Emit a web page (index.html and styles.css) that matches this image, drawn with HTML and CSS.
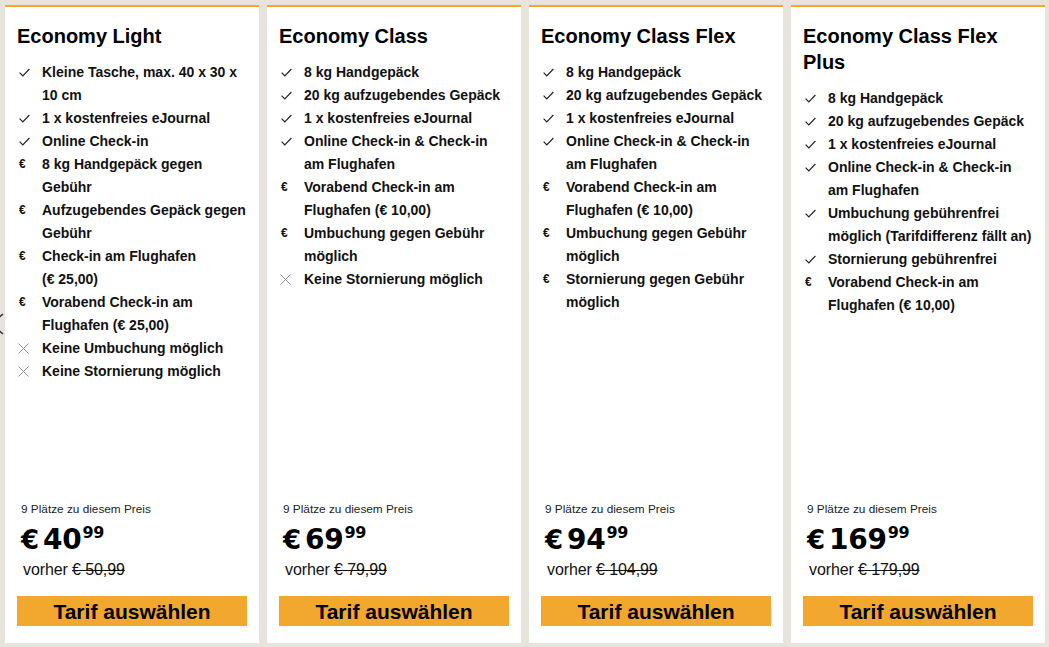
FILE: index.html
```html
<!DOCTYPE html>
<html lang="de">
<head>
<meta charset="utf-8">
<title>Tarife</title>
<link rel="stylesheet" href="styles.css">
</head>
<body>
<svg class="carousel-prev" width="14" height="28" viewBox="0 0 14 28"><polyline points="12,4 0,14 12,24" fill="none" stroke="#333" stroke-width="1.5"/></svg>
<main class="fares">
  <section class="card">
    <h2 class="title">Economy Light</h2>
    <ul class="features">
      <li class="ok">Kleine Tasche, max. 40 x 30 x 10 cm</li>
      <li class="ok">1 x kostenfreies eJournal</li>
      <li class="ok">Online Check-in</li>
      <li class="fee">8 kg Handgepäck gegen Gebühr</li>
      <li class="fee">Aufzugebendes Gepäck gegen Gebühr</li>
      <li class="fee">Check-in am Flughafen (€&nbsp;25,00)</li>
      <li class="fee">Vorabend Check-in am Flughafen (€&nbsp;25,00)</li>
      <li class="no">Keine Umbuchung möglich</li>
      <li class="no">Keine Stornierung möglich</li>
    </ul>
    <div class="bottom">
      <div class="seats">9 Plätze zu diesem Preis</div>
      <div class="price"><span class="cur">€</span><span class="int">40</span><span class="cents">99</span></div>
      <div class="before">vorher <s>€&nbsp;50,99</s></div>
      <button class="select">Tarif auswählen</button>
    </div>
  </section>
  <section class="card">
    <h2 class="title">Economy Class</h2>
    <ul class="features">
      <li class="ok">8 kg Handgepäck</li>
      <li class="ok">20 kg aufzugebendes Gepäck</li>
      <li class="ok">1 x kostenfreies eJournal</li>
      <li class="ok">Online Check-in &amp; Check-in am Flughafen</li>
      <li class="fee">Vorabend Check-in am Flughafen (€&nbsp;10,00)</li>
      <li class="fee">Umbuchung gegen Gebühr möglich</li>
      <li class="no">Keine Stornierung möglich</li>
    </ul>
    <div class="bottom">
      <div class="seats">9 Plätze zu diesem Preis</div>
      <div class="price"><span class="cur">€</span><span class="int">69</span><span class="cents">99</span></div>
      <div class="before">vorher <s>€&nbsp;79,99</s></div>
      <button class="select">Tarif auswählen</button>
    </div>
  </section>
  <section class="card">
    <h2 class="title">Economy Class Flex</h2>
    <ul class="features">
      <li class="ok">8 kg Handgepäck</li>
      <li class="ok">20 kg aufzugebendes Gepäck</li>
      <li class="ok">1 x kostenfreies eJournal</li>
      <li class="ok">Online Check-in &amp; Check-in am Flughafen</li>
      <li class="fee">Vorabend Check-in am Flughafen (€&nbsp;10,00)</li>
      <li class="fee">Umbuchung gegen Gebühr möglich</li>
      <li class="fee">Stornierung gegen Gebühr möglich</li>
    </ul>
    <div class="bottom">
      <div class="seats">9 Plätze zu diesem Preis</div>
      <div class="price"><span class="cur">€</span><span class="int">94</span><span class="cents">99</span></div>
      <div class="before">vorher <s>€&nbsp;104,99</s></div>
      <button class="select">Tarif auswählen</button>
    </div>
  </section>
  <section class="card">
    <h2 class="title">Economy Class Flex Plus</h2>
    <ul class="features">
      <li class="ok">8 kg Handgepäck</li>
      <li class="ok">20 kg aufzugebendes Gepäck</li>
      <li class="ok">1 x kostenfreies eJournal</li>
      <li class="ok">Online Check-in &amp; Check-in am Flughafen</li>
      <li class="ok">Umbuchung gebührenfrei möglich (Tarifdifferenz fällt an)</li>
      <li class="ok">Stornierung gebührenfrei</li>
      <li class="fee">Vorabend Check-in am Flughafen (€&nbsp;10,00)</li>
    </ul>
    <div class="bottom">
      <div class="seats">9 Plätze zu diesem Preis</div>
      <div class="price"><span class="cur">€</span><span class="int">169</span><span class="cents">99</span></div>
      <div class="before">vorher <s>€&nbsp;179,99</s></div>
      <button class="select">Tarif auswählen</button>
    </div>
  </section>
</main>
</body>
</html>
```

FILE: styles.css
```css
* { box-sizing: border-box; }
html, body { margin: 0; padding: 0; }
body {
  background: #e7e4de;
  font-family: "Liberation Sans", Arial, sans-serif;
  color: #111;
  width: 1049px;
  height: 647px;
  overflow: hidden;
  position: relative;
}
.carousel-prev {
  position: absolute;
  left: -9px;
  top: 310px;
}
.fares {
  display: grid;
  grid-template-columns: repeat(4, 254px);
  column-gap: 8px;
  padding: 5px 4px 4px 5px;
  height: 647px;
}
.card {
  background: #fff;
  border-top: 2px solid #f2a72f;
  padding: 16px 12px 17px;
  display: flex;
  flex-direction: column;
}
.title {
  margin: 0;
  font-size: 20px;
  line-height: 26px;
  font-weight: 700;
  color: #000;
}
.features {
  list-style: none;
  margin: 12px -1px 0 0;
  padding: 0;
}
.features li {
  position: relative;
  padding-left: 25px;
  font-size: 14px;
  font-weight: 700;
  line-height: 23px;
  color: #111;
}
.features li::before {
  content: "";
  position: absolute;
  left: 2px;
  top: 7px;
  width: 11px;
  height: 9px;
  background-repeat: no-repeat;
  background-position: center;
}
.features li.ok::before {
  background-image: url("data:image/svg+xml;utf8,<svg xmlns='http://www.w3.org/2000/svg' width='11' height='9' viewBox='0 0 11 9'><polyline points='0.6,4.6 3.8,7.8 10.4,1' fill='none' stroke='%23222' stroke-width='1.2'/></svg>");
}
.features li.no::before {
  left: 1px;
  top: 6px;
  width: 11px;
  height: 11px;
  background-image: url("data:image/svg+xml;utf8,<svg xmlns='http://www.w3.org/2000/svg' width='11' height='11' viewBox='0 0 11 11'><path d='M0.5 0.5 L10.5 10.5 M10.5 0.5 L0.5 10.5' fill='none' stroke='%23939393' stroke-width='1'/></svg>");
}
.features li.fee::before {
  content: "€";
  left: 2px;
  top: 0;
  width: auto;
  height: auto;
  font-size: 12px;
  font-weight: 700;
  line-height: 23px;
  color: #111;
}
.bottom {
  margin-top: auto;
  display: flex;
  flex-direction: column;
}
.seats {
  padding-left: 4px;
  font-size: 11.8px;
  line-height: 14px;
  color: #222;
}
.price {
  display: flex;
  align-items: flex-start;
  margin-top: 9px;
  padding-left: 4px;
  font-family: "DejaVu Sans", sans-serif;
  font-weight: 700;
  color: #000;
}
.price .cur {
  font-size: 26px;
  line-height: 30px;
  margin-right: 4px;
}
.price .int {
  font-size: 28px;
  line-height: 30px;
  letter-spacing: -0.3px;
}
.price .cents {
  font-size: 16px;
  line-height: 16px;
  margin-top: 0;
  margin-left: 1px;
  letter-spacing: -0.3px;
}
.before {
  margin-top: 5px;
  padding-left: 6px;
  font-size: 16px;
  line-height: 20px;
  letter-spacing: -0.1px;
  color: #111;
}
.before s { text-decoration-thickness: 1px; }
.select {
  margin-top: 16px;
  height: 30px;
  width: 100%;
  border: 0;
  background: #f2a72f;
  font-family: "Liberation Sans", Arial, sans-serif;
  font-size: 21px;
  font-weight: 700;
  line-height: 30px;
  color: #000;
  padding: 1px 0 0;
  cursor: pointer;
}
```
